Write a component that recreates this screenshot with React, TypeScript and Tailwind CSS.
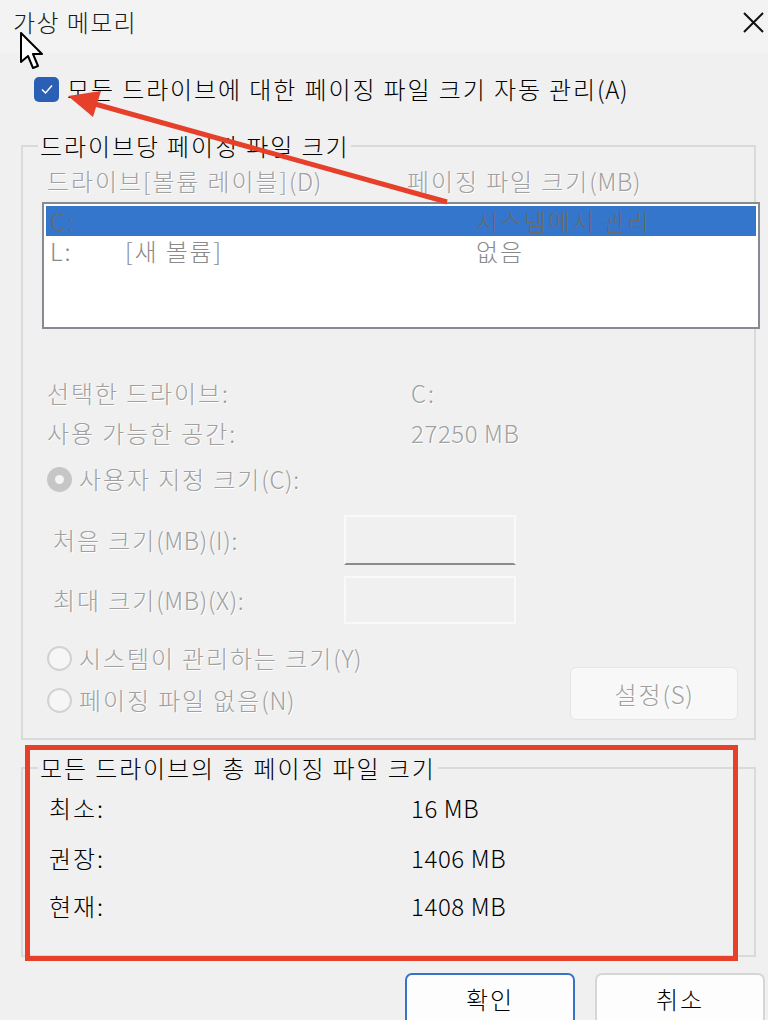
import React from "react";

const FONT = { fontFamily: '"Noto Sans CJK KR", "Noto Sans", sans-serif' };

function Radio({ checked }: { checked?: boolean }) {
  if (checked) {
    return (
      <div className="w-[25px] h-[25px] rounded-full bg-[#c6c6c6] flex items-center justify-center shrink-0">
        <div className="w-[9px] h-[9px] rounded-full bg-[#f4f4f4]" />
      </div>
    );
  }
  return <div className="w-[25px] h-[25px] rounded-full border-[2px] border-[#d2d2d2] bg-[#f6f6f6] shrink-0" />;
}

const dis = "text-[#a0a0a0] [text-shadow:1px_1px_0_#ffffff]";
const num = "tracking-[0.6px]";

export default function App() {
  return (
    <div className="relative w-[768px] h-[1020px] overflow-hidden bg-[#f0f0f0] text-[24px] leading-none tracking-[1.9px] font-light text-black whitespace-nowrap" style={FONT}>
      {/* title bar */}
      <div className="h-[53px] bg-[#f3f3f3] flex items-start justify-between">
        <div className="ml-[13px] mt-[9px] h-[26px] flex items-center text-[#1a1a1a] tracking-[1.4px]">가상 메모리</div>
        <svg className="mt-[12px] mr-[4px]" width="21" height="21" viewBox="0 0 21 21">
          <path d="M1 1 L20 20 M20 1 L1 20" stroke="#111" strokeWidth="2" />
        </svg>
      </div>

      {/* auto checkbox */}
      <div className="mt-[23px] ml-[34px] h-[26px] flex items-center gap-[8px]">
        <div className="w-[25px] h-[25px] rounded-[5px] bg-[#2a5fb6] flex items-center justify-center shrink-0">
          <svg width="14" height="14" viewBox="0 0 14 14">
            <path d="M2 7.5 L5.5 11 L12 3.5" stroke="#fff" strokeWidth="1.5" fill="none" />
          </svg>
        </div>
        <span>모든 드라이브에 대한 페이징 파일 크기 자동 관리<span className={num}>(A)</span></span>
      </div>

      {/* group 1 */}
      <div className="relative mt-[43px] ml-[21px] w-[735px] h-[595px] border-[2px] border-[#dadada]">
        <div className="absolute left-[15px] top-[-14px] h-[26px] px-[2px] bg-[#f0f0f0] flex items-center">드라이브당 페이징 파일 크기</div>

        <div className={`mt-[21px] h-[26px] flex items-center ${dis}`}>
          <span className="ml-[24px] w-[360px]">드라이브[볼륨 레이블]<span className={num}>(D)</span></span>
          <span>페이징 파일 크기<span className={num}>(MB)</span></span>
        </div>

        <div className="mt-[8px] ml-[19px] w-[718px] h-[127px] border-[2px] border-[#878a91] bg-white p-[2px]">
          <div className="h-[30px] bg-[#3476cc] flex items-center text-[#6a6a6a]">
            <span className="ml-[4px] w-[426px]">C:</span>
            <span>시스템에서 관리</span>
          </div>
          <div className="h-[30px] flex items-center text-[#8a8a8a]">
            <span className="ml-[4px] w-[75px]">L:</span>
            <span className="w-[351px]">[새 볼륨]</span>
            <span>없음</span>
          </div>
        </div>

        <div className={`mt-[51px] h-[26px] flex items-center ${dis}`}>
          <span className="ml-[24px] w-[364px]">선택한 드라이브:</span>
          <span>C:</span>
        </div>
        <div className={`mt-[14px] h-[26px] flex items-center ${dis}`}>
          <span className="ml-[24px] w-[364px]">사용 가능한 공간:</span>
          <span className={num}>27250 MB</span>
        </div>

        <div className={`mt-[20px] ml-[24px] h-[26px] flex items-center gap-[7px] ${dis}`}>
          <Radio checked />
          <span>사용자 지정 크기<span className={num}>(C):</span></span>
        </div>

        <div className={`mt-[23px] h-[50px] flex items-center ${dis}`}>
          <span className="ml-[30px] w-[291px]">처음 크기<span className={num}>(MB)(I):</span></span>
          <div className="w-[172px] h-[50px] border-[2px] border-[#f9f9f9] border-b-[#8c8c8c] bg-[#f0f0f0]" />
        </div>
        <div className={`mt-[11px] h-[48px] flex items-center ${dis}`}>
          <span className="ml-[30px] w-[291px]">최대 크기<span className={num}>(MB)(X):</span></span>
          <div className="w-[172px] h-[48px] border-[2px] border-[#f9f9f9] bg-[#f0f0f0]" />
        </div>

        <div className="mt-[21px] flex items-start justify-between">
          <div className={`ml-[24px] flex flex-col gap-[16px] ${dis}`}>
            <div className="h-[26px] flex items-center gap-[7px]">
              <Radio />
              <span>시스템이 관리하는 크기<span className={num}>(Y)</span></span>
            </div>
            <div className="h-[26px] flex items-center gap-[7px]">
              <Radio />
              <span>페이징 파일 없음<span className={num}>(N)</span></span>
            </div>
          </div>
          <div className={`mt-[22px] mr-[16px] w-[168px] h-[53px] rounded-[6px] border border-[#e6e6e6] bg-[#f8f8f8] flex items-center justify-center ${dis}`}>
            설정<span className={num}>(S)</span>
          </div>
        </div>
      </div>

      {/* group 2 */}
      <div className="relative mt-[27px] ml-[21px] w-[735px] h-[190px] border-[2px] border-[#dadada]">
        <div className="absolute left-[15px] top-[-14px] h-[26px] px-[2px] bg-[#f0f0f0] flex items-center">모든 드라이브의 총 페이징 파일 크기</div>
        <div className="mt-[26px] h-[26px] flex items-center">
          <span className="ml-[26px] w-[362px]">최소:</span>
          <span className={num}>16 MB</span>
        </div>
        <div className="mt-[24px] h-[26px] flex items-center">
          <span className="ml-[26px] w-[362px]">권장:</span>
          <span className={num}>1406 MB</span>
        </div>
        <div className="mt-[22px] h-[26px] flex items-center">
          <span className="ml-[26px] w-[362px]">현재:</span>
          <span className={num}>1408 MB</span>
        </div>
      </div>

      {/* buttons */}
      <div className="mt-[16px] pr-[3px] flex justify-end gap-[20px]">
        <div className="w-[170px] h-[60px] rounded-[7px] border-[2px] border-[#3574c9] bg-[#fdfdfd] flex items-start justify-center pt-[12px]">확인</div>
        <div className="w-[170px] h-[60px] rounded-[7px] border-[2px] border-[#d6d6d6] bg-[#fdfdfd] flex items-start justify-center pt-[12px]">취소</div>
      </div>

      {/* red annotation rectangle */}
      <div className="absolute left-[25px] top-[745px] w-[713px] h-[216px] border-[5px] border-[#e6402a]" />

      {/* red arrow */}
      <svg className="absolute left-0 top-0 pointer-events-none" width="768" height="1020">
        <line x1="447" y1="202" x2="95" y2="104" stroke="#e6402a" strokeWidth="5" />
        <polygon points="68,96 101,91 93,117" fill="#e6402a" />
      </svg>

      {/* mouse cursor */}
      <svg className="absolute left-[20px] top-[32px]" width="26" height="40" viewBox="0 0 26 40">
        <path d="M1 1 L1 30 L8 24 L13 36 L18 34 L13 22 L22 22 Z" fill="#fff" stroke="#000" strokeWidth="2" strokeLinejoin="round" />
      </svg>
    </div>
  );
}
